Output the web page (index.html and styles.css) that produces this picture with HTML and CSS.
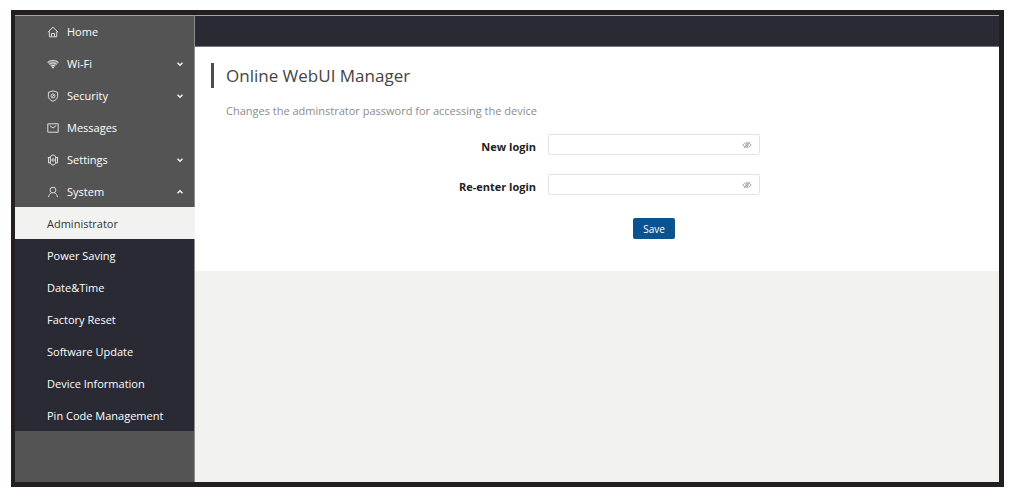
FILE: index.html
```html
<!DOCTYPE html>
<html lang="en">
<head>
<meta charset="utf-8">
<title>Online WebUI Manager</title>
<link rel="stylesheet" href="styles.css">
</head>
<body>
<div class="frame">
  <nav class="sidebar" aria-label="Main">
    <a class="item" href="#home">
      <svg class="icon" viewBox="0 0 12 12"><path d="M.9 6.2 6 1.2l5.1 5M2.3 5.4v5.4h7.4V5.4M4.5 10.6V7.5h3v3.1"/></svg>
      <span>Home</span>
    </a>
    <a class="item" href="#wifi">
      <svg class="icon" viewBox="0 0 12 12"><path class="solid" d="M0 4.2c3.5-3 8.5-3 12 0l-6 6.3z" opacity=".45"/><path d="M.8 4.2c3-2.4 7.4-2.4 10.4 0M2.5 6.2c2-1.7 5-1.7 7 0M4.2 8.1c1-.9 2.6-.9 3.6 0"/><circle class="solid" cx="6" cy="9.4" r=".9"/></svg>
      <span>Wi-Fi</span>
      <svg class="arrow" viewBox="0 0 8 8"><path d="m1.5 2.8 2.5 2.4 2.5-2.4"/></svg>
    </a>
    <a class="item" href="#security">
      <svg class="icon" viewBox="0 0 12 12"><path d="M6 .9 10.6 2.3v4.2c0 2-1.7 3.6-4.6 4.8-2.9-1.2-4.6-2.8-4.6-4.8V2.3z"/><circle cx="6" cy="5.9" r="2"/><path d="m5.3 6.6 1.9-2"/></svg>
      <span>Security</span>
      <svg class="arrow" viewBox="0 0 8 8"><path d="m1.5 2.8 2.5 2.4 2.5-2.4"/></svg>
    </a>
    <a class="item" href="#messages">
      <svg class="icon" viewBox="0 0 12 12"><path d="M.8 1.8h10.4v8.4H.8zM2.8 3.6 6 6l3.2-2.4"/></svg>
      <span>Messages</span>
    </a>
    <a class="item" href="#settings">
      <svg class="icon" viewBox="0 0 12 12"><path d="M6 .8 8.6 2.400v7.200L6 11.200 3.400 9.600V2.400zM3.400 3.500H.8M3.400 8.800H1.200M1.500 3.500v5.300M8.600 3.500h2.600M8.600 8.800h2.200M10.500 3.500v5.300"/><circle cx="6" cy="6" r="1.200"/></svg>
      <span>Settings</span>
      <svg class="arrow" viewBox="0 0 8 8"><path d="m1.5 2.8 2.5 2.4 2.5-2.4"/></svg>
    </a>
    <a class="item" href="#system">
      <svg class="icon" viewBox="0 0 12 12"><circle cx="6" cy="4.1" r="2.9"/><path d="M1.6 11.2c.2-2.3 1.4-3.7 2.9-4.3M10.4 11.2c-.2-2.3-1.4-3.7-2.9-4.3"/></svg>
      <span>System</span>
      <svg class="arrow" viewBox="0 0 8 8"><path d="m1.5 5.2 2.5-2.4 2.5 2.4"/></svg>
    </a>
    <div class="submenu">
      <a class="item current" href="#administrator" aria-current="page">Administrator</a>
      <a class="item" href="#power">Power Saving</a>
      <a class="item" href="#datetime">Date&amp;Time</a>
      <a class="item" href="#reset">Factory Reset</a>
      <a class="item" href="#update">Software Update</a>
      <a class="item" href="#device">Device Information</a>
      <a class="item" href="#pin">Pin Code Management</a>
    </div>
  </nav>
  <div class="page">
    <header class="topbar"></header>
    <main class="panel">
      <h1 class="title">Online WebUI Manager</h1>
      <p class="hint">Changes the adminstrator password for accessing the device</p>
      <form class="form">
        <label class="label" for="new-login">New login</label>
        <div class="field">
          <input class="input" id="new-login" type="password">
          <button class="reveal" type="button" aria-label="Show new login">
            <svg class="eye" viewBox="0 0 12 12"><path d="M1 6c2.3-3.6 7.7-3.6 10 0-2.3 3.6-7.7 3.6-10 0z"/><circle cx="6" cy="6" r="1.5"/><path d="m2.2 10 7.6-8"/></svg>
          </button>
        </div>
        <label class="label" for="repeat-login">Re-enter login</label>
        <div class="field">
          <input class="input" id="repeat-login" type="password">
          <button class="reveal" type="button" aria-label="Show re-entered login">
            <svg class="eye" viewBox="0 0 12 12"><path d="M1 6c2.3-3.6 7.7-3.6 10 0-2.3 3.6-7.7 3.6-10 0z"/><circle cx="6" cy="6" r="1.5"/><path d="m2.2 10 7.6-8"/></svg>
          </button>
        </div>
        <button class="save" type="submit">Save</button>
      </form>
    </main>
  </div>
</div>
</body>
</html>
```
FILE: styles.css
```css
* {
  box-sizing: border-box;
}

body {
  margin: 0;
  min-height: 100vh;
  padding: 10px 6px 11px 11px;
  display: flex;
  background: #fff;
  color: #333;
  font: 11px/16px "Open Sans", "Noto Sans", sans-serif;
}

.frame {
  flex: 1;
  display: flex;
  border: 5px solid #231f20;
  border-width: 5px 5px 5px 4px;
  background: #f2f2f0;
}

.sidebar {
  flex: 0 0 180px;
  border-right: 1px solid #8c8c8c;
  background: #545454;
  box-shadow: inset 0 1px #a5a3a6;
}

.item {
  display: flex;
  align-items: center;
  height: 32px;
  padding: 1px 10px 0 32px;
  color: #fff;
  font-weight: 500;
  text-decoration: none;
}

.icon {
  width: 12px;
  height: 12px;
  margin-right: 8px;
}

.icon,
.arrow,
.eye {
  fill: none;
  stroke: #dcdcdc;
  stroke-width: 1;
}

.solid {
  fill: #dcdcdc;
  stroke: none;
}

.arrow {
  width: 8px;
  height: 8px;
  margin-left: auto;
  stroke: #f4f4f4;
  stroke-width: 1.5;
}

.submenu {
  background: #292a33;
}

.current {
  margin-right: -1px;
  background: #f2f2f0;
  color: #333;
}

.page {
  flex: 1;
  min-width: 0;
}

.topbar {
  height: 32px;
  border-top: 1px solid #a5a3a6;
  border-bottom: 1px solid #77777d;
  background: #292a33;
}

.panel {
  padding: 16px 16px 32px;
  background: #fff;
}

.title {
  margin: 0;
  padding-left: 12px;
  border-left: 3px solid #4c4d50;
  color: #444;
  font-size: 17px;
  font-weight: 400;
  line-height: 25px;
}

.hint {
  margin: 15px 0;
  padding-left: 15px;
  color: #8c8c8c;
}

.form {
  display: grid;
  grid-template-columns: 325fr 212fr 211fr;
  gap: 19px 12px;
}

.label {
  grid-column: 1;
  justify-self: end;
  padding-top: 5px;
  color: #222;
  font-weight: 700;
}

.field {
  grid-column: 2;
  display: flex;
  height: 21px;
  border: 1px solid #e3e3e3;
  border-radius: 2px;
}

.input {
  flex: 1;
  min-width: 0;
  padding: 0 6px;
  border: 0;
  background: none;
  font: inherit;
  outline: none;
}

.reveal {
  display: flex;
  align-items: center;
  padding: 0 7px;
  border: 0;
  background: none;
}

.eye {
  width: 10px;
  height: 10px;
  stroke: #999;
}

.save {
  grid-column: 2;
  justify-self: center;
  height: 21px;
  margin-top: 4px;
  padding: 0 10px;
  border: 0;
  border-radius: 2px;
  background: #0b538f;
  color: #fff;
  font: 10px/16px "Open Sans", "Noto Sans", sans-serif;
}
```
